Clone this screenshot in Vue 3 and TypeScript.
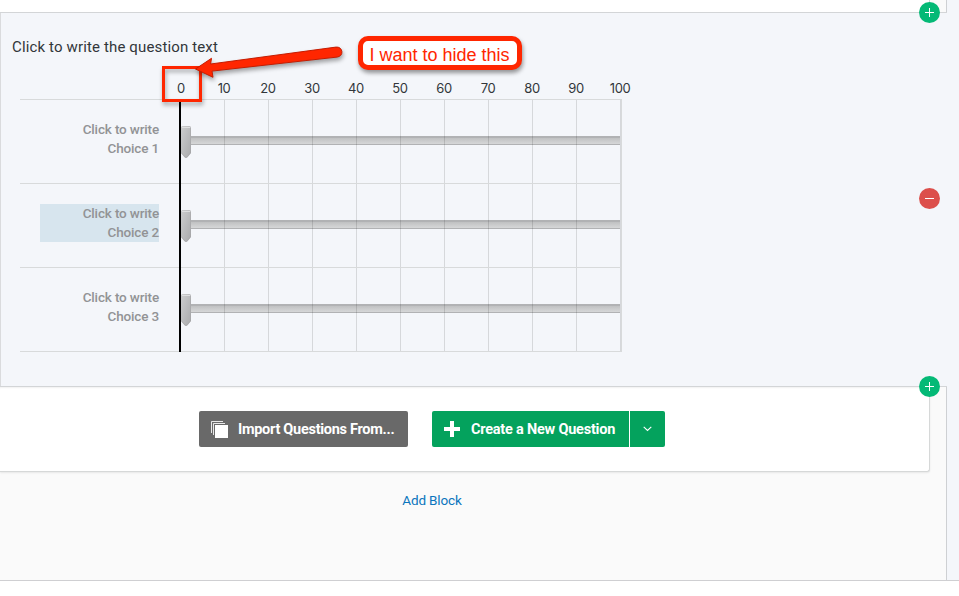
<script setup lang="ts">
import { ref } from 'vue'

interface Choice {
  id: number
  selected: boolean
}

const ticks: number[] = [0, 10, 20, 30, 40, 50, 60, 70, 80, 90, 100]
const choices = ref<Choice[]>([
  { id: 1, selected: false },
  { id: 2, selected: true },
  { id: 3, selected: false },
])
</script>

<template>
  <main class="editor">
    <div class="previous"><div class="previous-card"></div></div>

    <section class="question">
      <h1 class="title"><span>Click to write the question text</span></h1>
      <div class="scale">
        <span v-for="t in ticks" :key="t" class="tick">{{ t }}</span>
      </div>
      <div class="rows">
        <div v-for="c in choices" :key="c.id" class="row">
          <div class="label-cell">
            <div class="label" :class="{ selected: c.selected }">
              <span>Click to write</span><br /><span>Choice {{ c.id }}</span>
            </div>
          </div>
          <div class="slider">
            <i v-for="n in 10" :key="n" class="cell"></i>
            <div class="track"></div>
            <svg class="handle" width="10" height="32" viewBox="0 0 10 32">
              <defs>
                <linearGradient :id="'grip' + c.id" x1="0" y1="0" x2="1" y2="1">
                  <stop offset="0" stop-color="#cccdce" />
                  <stop offset="1" stop-color="#a9aaac" />
                </linearGradient>
              </defs>
              <path d="M0 1.5Q0 0 1.5 0h7Q10 0 10 1.500V27L6.500 31.300Q5 32.500 3.500 31.300L0 27Z" :fill="'url(#grip' + c.id + ')'" />
              <path d="M1 1.500h8" stroke="#dedfe0" />
              <path d="M9.500 2v25L6 31.200H4L.5 27" fill="none" stroke="#9fa0a2" stroke-opacity=".45" />
            </svg>
          </div>
        </div>
      </div>

      <div class="callout"><span>I want to hide this</span></div>
      <div class="highlight"></div>
      <svg class="arrow" width="160" height="46" viewBox="190 40 160 46">
        <path d="M195.500 69L211.500 58.300L210.600 64L336 47.100C339.200 46.700 341.600 48.700 341.900 51.600C342.200 54.500 340.200 56.700 337 57.100L212 71.100L213 77.300Z" fill="#ff2600" stroke="#c41c00" stroke-width="1" stroke-linejoin="round" />
      </svg>

      <button class="dot add top" aria-label="Add">
        <svg width="21" height="21" viewBox="0 0 21 21"><path d="M6 10.500h9M10.500 6v9" stroke="#fff" /></svg>
      </button>
      <button class="dot remove" aria-label="Remove">
        <svg width="21" height="21" viewBox="0 0 21 21"><path d="M6 10.500h9" stroke="#fff" /></svg>
      </button>
      <button class="dot add bottom" aria-label="Add">
        <svg width="21" height="21" viewBox="0 0 21 21"><path d="M6 10.500h9M10.500 6v9" stroke="#fff" /></svg>
      </button>
    </section>

    <section class="block">
      <div class="actions">
        <button class="btn import">
          <svg width="17" height="17" viewBox="0 0 17 17">
            <path d="M.5 12V.5H12M2.500 14V2.500H14" fill="none" stroke="#fff" stroke-opacity=".85" />
            <path d="M4 4h13v13H4z" fill="#fff" />
          </svg>
          <span>Import Questions From...</span>
        </button>
        <div class="split">
          <button class="btn create">
            <svg width="16" height="16" viewBox="0 0 16 16"><path d="M0 8h16M8 0v16" stroke="#fff" stroke-width="4" /></svg>
            <span>Create a New Question</span>
          </button>
          <button class="btn more" aria-label="More">
            <svg width="9" height="6" viewBox="0 0 9 6"><path d="M.7.8L4.500 4.500L8.300.8" fill="none" stroke="#fff" stroke-width="1.100" /></svg>
          </button>
        </div>
      </div>
      <div class="add-block"><a>Add Block</a></div>
    </section>
  </main>
</template>

<style>
body {
  background: #fff;
  overflow: hidden;
}
</style>

<style scoped>
* {
  box-sizing: border-box;
}
.editor {
  width: 959px;
  height: 581px;
  background: #f4f6fa;
  border-bottom: 1px solid #cfcfd2;
  font-family: Roboto, "Liberation Sans", sans-serif;
  font-size: 14px;
}
.previous {
  width: 947px;
  height: 12px;
  background: #fafafa;
  border-right: 1px solid #ced0d3;
}
.previous-card {
  width: 930px;
  height: 12px;
  background: #fff;
  border-right: 1px solid #d4d6d6;
}
.question {
  position: relative;
  height: 375px;
  padding: 25px 0 0 11px;
  border-left: 1px solid #dadbdd;
}
.question::before,
.question::after {
  content: "";
  position: absolute;
  left: -1px;
  top: 0;
  width: 947px;
  height: 1px;
  background: #d3d5d7;
}
.question::after {
  top: auto;
  bottom: 0;
}
.title {
  margin: 0;
  height: 20px;
  font-size: 15px;
  font-weight: 400;
  line-height: 20px;
  color: #32363a;
  white-space: nowrap;
  letter-spacing: 0.14px;
}
.scale {
  display: flex;
  margin: 21px 0 1px 146px;
  height: 20px;
  line-height: 20px;
  font-family: Inter, sans-serif;
  font-size: 13px;
  color: #32363a;
}
.tick {
  width: 44px;
  text-align: center;
  letter-spacing: -0.4px;
}
.tick:first-child {
  padding-left: 2px;
}
.rows {
  width: 602px;
  margin-left: 8px;
  border-top: 1px solid #d8dadb;
  border-right: 1px solid #d8dadb;
}
.row {
  display: flex;
  height: 84px;
  border-bottom: 1px solid #d8dadb;
}
.label-cell {
  width: 159px;
  padding: 20px 20px 0 20px;
}
.label {
  height: 38px;
  line-height: 19px;
  text-align: right;
  color: #929395;
  font-size: 13.5px;
  font-weight: 500;
  letter-spacing: -0.15px;
  white-space: nowrap;
}
.label.selected {
  background: #d7e5ee;
}
.slider {
  position: relative;
  display: flex;
  width: 442px;
  height: 84px;
  border-left: 2px solid #000;
}
.cell {
  position: relative;
  z-index: 1;
  width: 44px;
  height: 83px;
  border-right: 1px solid rgba(0, 0, 0, 0.12);
}
.track {
  position: absolute;
  left: 10px;
  right: 1px;
  top: 36px;
  height: 9px;
  border-top: 2px solid #b1b2b4;
  border-bottom: 1px solid #b1b2b4;
  background: linear-gradient(#c0c1c2, #d6d7d8);
}
.handle {
  position: absolute;
  left: 0;
  top: 26px;
}
.callout {
  position: absolute;
  left: 357px;
  top: 24px;
  width: 164px;
  height: 34px;
  padding-right: 1px;
  border: 5px solid #ff2600;
  border-radius: 10px;
  background: #fff;
  color: #ff2600;
  font: 18px/28px "Liberation Sans", sans-serif;
  text-align: center;
  white-space: nowrap;
  box-shadow: 1px 3px 4px rgba(0, 0, 0, 0.4);
}
.highlight {
  position: absolute;
  left: 161px;
  top: 54px;
  width: 40px;
  height: 36px;
  border: 3px solid #ff2600;
  filter: drop-shadow(1px 3px 2px rgba(0, 0, 0, 0.35));
}
.arrow {
  position: absolute;
  left: 189px;
  top: 28px;
  filter: drop-shadow(1px 3px 2px rgba(0, 0, 0, 0.35));
}
button {
  margin: 0;
  padding: 0;
  border: 0;
}
.dot {
  position: absolute;
  z-index: 1;
  left: 918px;
  width: 21px;
  height: 21px;
  border-radius: 50%;
  background: #04b976;
}
.dot svg {
  display: block;
}
.dot.top {
  top: -10px;
}
.dot.remove {
  top: 176px;
  background: #dc4f4b;
}
.dot.bottom {
  top: 364px;
}
.block {
  width: 947px;
  height: 193px;
  background: #fafafa;
  border-right: 1px solid #ced0d3;
}
.actions {
  display: flex;
  width: 930px;
  height: 85px;
  padding: 24px 0 0 199px;
  gap: 24px;
  background: #fff;
  border: solid #d6d8d8;
  border-width: 0 1px 1px 0;
  border-bottom-right-radius: 3px;
  box-shadow: 0 1px 2px rgba(0, 0, 0, 0.08), inset 0 2px 2px -1px rgba(0, 0, 0, 0.06);
}
.btn {
  display: flex;
  align-items: center;
  height: 36px;
  color: #fff;
  font: 700 14.5px/36px Roboto, sans-serif;
  white-space: nowrap;
}
.btn span {
  padding-top: 1px;
}
.import {
  width: 209px;
  padding-left: 12px;
  gap: 10px;
  border-radius: 2px;
  background: #696969;
  letter-spacing: -0.28px;
}
.split {
  display: flex;
  gap: 1px;
}
.create {
  width: 197px;
  padding-left: 12px;
  gap: 11px;
  border-radius: 2px 0 0 2px;
  background: #04a25d;
  letter-spacing: -0.22px;
}
.more {
  width: 35px;
  justify-content: center;
  border-radius: 0 2px 2px 0;
  background: #04a25d;
}
.add-block {
  padding-top: 18px;
  width: 864px;
  text-align: center;
  line-height: 20px;
  font-size: 13.5px;
  letter-spacing: -0.15px;
  color: #0b75bd;
}
</style>
